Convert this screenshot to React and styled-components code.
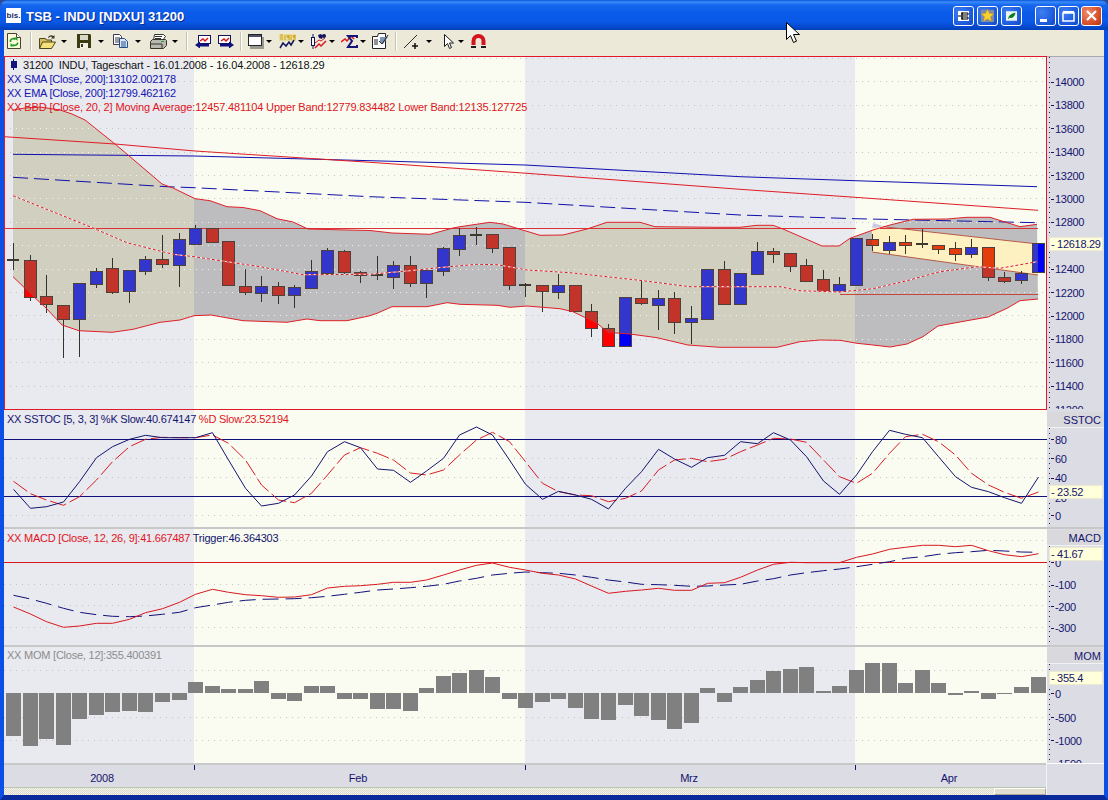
import React from 'react';
import styled, { createGlobalStyle } from 'styled-components';

const GlobalStyle = createGlobalStyle`
  html, body { margin: 0; padding: 0; background: #2a4a9a; }
  body { font-family: "Liberation Sans", Arial, sans-serif; overflow: hidden; }
  #root { width: 1108px; height: 800px; }
`;

const AXIS_INK = '#14146e';
const FONT = '"Liberation Sans", Arial, sans-serif';

const Window = styled.div`
  position: relative;
  width: 1108px;
  height: 800px;
  display: flex;
  flex-direction: column;
  overflow: hidden;
  border-radius: 8px 8px 0 0;
`;

const TitleBar = styled.div`
  height: 30px;
  flex: none;
  display: flex;
  align-items: center;
  padding: 1px 6px 0 6px;
  box-sizing: border-box;
  background: linear-gradient(180deg, #0a56d8 0, #3a8cfa 2px, #1666ee 5px, #0a5aea 14px, #0a58e6 22px, #0448cc 27px, #0340b8 30px);
`;

const TitleLogo = styled.div`
  width: 15px;
  height: 15px;
  background: #fff;
  color: #1a2a6a;
  font: bold 8px ${FONT};
  line-height: 15px;
  text-align: center;
`;

const TitleText = styled.div`
  margin-left: 5px;
  padding-top: 2px;
  color: #fff;
  font: bold 13px ${FONT};
  text-shadow: 1px 1px 0 #0a2a90;
  flex: 1;
`;

const CaptionGroup = styled.div`
  display: flex;
  gap: ${p => p.$gap}px;
  margin-left: ${p => p.$left}px;
`;

const CaptionButton = styled.div`
  width: 21px;
  height: 20px;
  box-sizing: border-box;
  border: 1px solid #fff;
  border-radius: 3px;
  display: flex;
  align-items: center;
  justify-content: center;
  background: ${p => p.$close
    ? 'radial-gradient(circle at 30% 30%, #ee8a6a, #d8502c 60%, #b83010)'
    : 'radial-gradient(circle at 30% 30%, #3f7ff0, #1f5ee0 60%, #1448c4)'};
`;

const Body = styled.div`
  flex: 1;
  display: flex;
  flex-direction: column;
  border-style: solid;
  border-color: #0b4fe6;
  border-width: 0 4px 5px 4px;
  border-bottom-color: #0a2a9c;
  min-height: 0;
`;

const Toolbar = styled.div`
  height: 26px;
  flex: none;
  box-sizing: border-box;
  display: flex;
  align-items: center;
  padding: 0 0 4px 3px;
  background: #ece9d8;
`;

const Tool = styled.span`
  display: flex;
  margin-left: ${p => p.$left || 0}px;
  width: ${p => p.$width}px;
`;

const DropArrow = styled.span`
  width: 0;
  height: 0;
  margin-left: ${p => p.$left}px;
  border-left: 3px solid transparent;
  border-right: 3px solid transparent;
  border-top: 3px solid #000;
`;

const ToolSep = styled.span`
  width: 1px;
  height: 19px;
  margin-left: ${p => p.$left}px;
  background: #c6c3b2;
  border-right: 1px solid #fff;
`;

const Pane = styled.div`
  display: flex;
  height: ${p => p.$height}px;
  flex: none;
`;

const Plot = styled.div`
  position: relative;
  width: 1043px;
  flex: none;
  overflow: hidden;
  &::after {
    content: '';
    display: ${p => (p.$framed ? 'block' : 'none')};
    position: absolute;
    inset: 0 0 1px 0;
    border: 1px solid #e2182a;
  }
`;

const Chart = styled.svg`
  display: block;
`;

const Legend = styled.div`
  position: absolute;
  top: ${p => p.$top}px;
  left: 3px;
  font-size: 11px;
  line-height: 14px;
  white-space: nowrap;
`;

const LegendLine = styled.div`
  color: ${p => p.$color};
  padding-left: ${p => p.$indent || 0}px;
  letter-spacing: ${p => p.$spacing || -0.23}px;
`;

const LegendPart = styled.span`
  color: ${p => p.$color};
`;

const TitleCandle = styled.svg`
  position: absolute;
  left: 4px;
  top: 3px;
`;

const Axis = styled.div`
  position: relative;
  flex: 1;
  display: flex;
  flex-direction: column;
  background: #dcdce4;
  overflow: hidden;
  border-top: ${p => (p.$ruled ? '1px solid #a8a8b0' : 'none')};
`;

const AxisHeader = styled.div`
  height: 15px;
  flex: none;
  margin-top: 1px;
  background: #d9d9dd;
  border-bottom: 1px solid #f2f2f2;
  color: ${AXIS_INK};
  font-size: 11px;
  line-height: 16px;
  text-align: right;
  padding-right: 3px;
`;

const AxisLabel = styled.text`
  font: 11px ${FONT};
  letter-spacing: -0.3px;
  fill: ${AXIS_INK};
`;

const ValueFlag = styled.div`
  position: absolute;
  left: 2px;
  right: 1px;
  top: ${p => p.$top}px;
  height: 14px;
  box-sizing: border-box;
  background: #ffffdc;
  border: 1px solid #ecebd0;
  color: #14146e;
  font-size: 11px;
  letter-spacing: -0.3px;
  line-height: 13px;
  padding-left: 1px;
  white-space: nowrap;
`;

const Rule = styled.div`
  height: 2px;
  flex: none;
  background: #c8c8c8;
`;

const Footer = styled.div`
  display: flex;
  flex: 1;
  min-height: 0;
`;

const FooterMain = styled.div`
  width: 1043px;
  display: flex;
  flex-direction: column;
  flex: none;
  border-right: 1px solid #f4f4f4;
  box-sizing: border-box;
`;

const FooterCorner = styled.div`
  flex: 1;
  background: #dcdce4;
  border-top: 1px solid #fff;
`;

const TimeAxis = styled.div`
  height: 22px;
  flex: none;
  background: #dcdce4;
  border-bottom: 1px solid #b8c8b0;
`;

const TimeLabel = styled.text`
  font: 11px ${FONT};
  letter-spacing: -0.2px;
  fill: ${AXIS_INK};
  text-anchor: middle;
`;

const ScrollTrack = styled.div`
  flex: 1;
  display: flex;
  justify-content: flex-end;
  background: repeating-conic-gradient(#f6f5ee 0 25%, #d8d6c8 0 50%) 0 0 / 2px 2px;
`;

const ScrollThumb = styled.div`
  width: 52px;
  box-sizing: border-box;
  background: #e2dfd0;
  border-top: 1px solid #fff;
  border-left: 1px solid #fff;
  border-right: 1px solid #a8a698;
  border-bottom: 1px solid #a8a698;
`;

const MouseCursor = styled.svg`
  position: absolute;
  left: 786px;
  top: 22px;
`;

// ---- data, in page pixels ----

const X = i => Math.round(13.3 + 16.52 * i) + 0.5;
const path = list => list.map(p => p.join(',')).join(' ');
const series = ys => ys.map((y, i) => `${X(i)},${y}`).join(' ');

const candles = [
  [243, 259, 261, 270, 'd'], [255, 260, 297, 301, 'r'], [275, 296, 304, 313, 'r'], [305, 305, 319, 358, 'r'],
  [283, 283, 319, 357, 'b'], [268, 271, 284, 288, 'b'], [258, 268, 292, 294, 'r'], [270, 270, 291, 303, 'b'],
  [256, 259, 271, 275, 'b'], [235, 259, 264, 268, 'r'], [233, 239, 265, 287, 'b'], [225, 228, 244, 245, 'b'],
  [228, 228, 242, 243, 'r'], [241, 241, 285, 285, 'r'], [269, 286, 292, 295, 'r'], [276, 286, 293, 302, 'b'],
  [282, 286, 295, 304, 'r'], [285, 287, 295, 308, 'b'], [260, 271, 288, 288, 'b'], [248, 250, 273, 273, 'b'],
  [250, 251, 272, 274, 'r'], [271, 272, 275, 283, 'r'], [256, 274, 276, 280, 'd'], [261, 265, 277, 289, 'b'],
  [256, 265, 283, 287, 'r'], [270, 270, 283, 298, 'b'], [247, 248, 271, 276, 'b'], [228, 235, 249, 256, 'b'],
  [227, 234, 236, 245, 'd'], [234, 234, 248, 253, 'r'], [247, 247, 285, 290, 'r'], [283, 284, 286, 297, 'd'],
  [285, 285, 291, 312, 'r'], [274, 285, 292, 299, 'b'], [285, 285, 311, 311, 'r'], [304, 311, 328, 337, 'r'],
  [324, 328, 346, 347, 'r'], [297, 297, 346, 346, 'b'], [280, 298, 303, 305, 'r'], [290, 298, 305, 330, 'b'],
  [292, 298, 322, 334, 'r'], [306, 318, 322, 344, 'b'], [269, 269, 319, 319, 'b'], [261, 269, 304, 304, 'r'],
  [273, 273, 304, 304, 'b'], [242, 251, 274, 274, 'b'], [248, 251, 254, 263, 'r'], [253, 253, 266, 272, 'r'],
  [259, 265, 281, 282, 'r'], [270, 279, 291, 292, 'r'], [277, 284, 291, 293, 'b'], [238, 238, 285, 285, 'b'],
  [234, 239, 245, 251, 'r'], [236, 242, 250, 254, 'b'], [235, 242, 245, 254, 'r'], [229, 243, 245, 248, 'd'],
  [245, 245, 249, 254, 'r'], [242, 248, 254, 261, 'r'], [239, 247, 254, 258, 'b'], [247, 247, 277, 281, 'r'],
  [272, 277, 281, 283, 'r'], [271, 273, 280, 284, 'b'], [243, 243, 272, 272, 'b'],
];

const upperBand = [
  [13, 110], [25, 108], [40, 107], [60, 110], [72, 114], [85, 120], [115, 144], [128, 155], [162, 184], [173, 188],
  [195, 198.7], [210, 200.7], [227, 206.7], [243, 207.5], [260, 210.7], [277, 218.7], [293, 222], [308, 229], [327, 229.5],
  [370, 230.5], [392, 233], [430, 234.3], [453, 228], [460, 226.7], [490, 222.3], [503, 224], [517, 228.3], [540, 235.3],
  [563, 235], [587, 229], [607, 222.3], [640, 222.3], [655, 226.7], [717, 227.3], [740, 227.3], [757, 225.3], [773, 225.3],
  [783, 229], [822, 246], [839, 246], [850, 238.3], [873, 230], [890, 225], [913, 219.3], [947, 219], [967, 217.3],
  [990, 217.3], [1020, 226.7], [1037, 224.3],
];

const lowerBand = [
  [13, 276.7], [33, 296], [46, 308], [62, 325], [79, 330.7], [112, 332.3], [133, 329.3], [160, 322.3], [180, 320], [194, 315.7],
  [211, 315], [243, 320.7], [287, 322.3], [307, 319], [320, 320.7], [347, 320.7], [370, 315.7], [377, 313.3], [392, 306.7],
  [427, 306.7], [447, 302.7], [460, 304.3], [497, 305.3], [510, 307.3], [527, 306], [560, 308.7], [573, 311.7], [597, 323.3],
  [608, 332.3], [630, 334], [657, 337.7], [688, 345], [720, 347.3], [777, 347.3], [800, 341.7], [820, 340], [840, 340.3],
  [857, 343.3], [873, 345], [890, 347], [907, 344], [923, 336.7], [938, 326], [967, 320.7], [988, 317], [1007, 308.3],
  [1020, 300.7], [1038, 299],
];

const movingAverage = [
  [13, 195.7], [90, 226.7], [127, 242.7], [173, 254.3], [194, 256.7], [260, 266.7], [303, 274.7], [370, 274.3], [410, 270.7],
  [443, 267.3], [477, 264.3], [497, 264.7], [527, 270], [570, 272.7], [637, 280], [690, 286.7], [780, 286.7], [800, 290.7],
  [840, 292], [873, 288.7], [907, 280.7], [940, 271.7], [977, 266.7], [1000, 268.3], [1037, 261.7],
];

const trendLine = [[4, 136.7], [115, 144], [195, 151], [370, 162.3], [527, 173.3], [740, 189.3], [855, 197.3], [1038, 210.3]];
const smaLine = [[13, 154.3], [194, 156], [370, 160.7], [525, 165], [740, 176.7], [855, 180.7], [1037, 186.7]];
const emaLine = [[13, 177.3], [167, 186.7], [194, 187.7], [370, 196.7], [525, 202.3], [740, 215], [855, 218.7], [1037, 222.7]];
const channel = [[872, 228], [883, 226.7], [1038, 244], [1038, 275], [872, 252]];

const stochK = [489.3, 508.3, 506.7, 502, 481.7, 457.7, 446.7, 439.3, 435.3, 437.7, 437.7, 437.7, 432.7, 460, 488.3, 506, 503.3, 495, 476, 451.7, 441.7, 447.7, 469, 470.3, 482.3, 471, 458.3, 435, 427, 435, 460, 484.3, 499.3, 491.3, 495, 499.3, 509, 488.3, 471.7, 449.3, 459, 467.3, 457.7, 455.3, 441.7, 443.7, 432.7, 440, 456.7, 481, 494.3, 475, 451.7, 430.3, 434.3, 437.7, 456.7, 476.7, 487.3, 491.7, 497.7, 503.3, 477];
const stochD = [481.3, 493.7, 500, 505.3, 496.7, 480, 461.7, 446.7, 439.3, 437.3, 437.7, 437.7, 435, 443.3, 460, 485, 500, 502.7, 493.3, 475, 455, 447.7, 453.3, 460, 473, 475, 470, 455, 440, 432.3, 441.7, 461.7, 483.3, 491.7, 495, 495.7, 501.7, 498.3, 491, 470, 460, 458.3, 461.7, 459.3, 451.7, 445, 438.3, 439, 442.3, 460, 476.7, 483.3, 473.3, 453.3, 436.7, 434.3, 441.7, 455, 473.3, 485, 492.3, 498.3, 492];
const macdLine = [607, 614, 621.7, 627.3, 626, 623.3, 623.3, 619.3, 612.7, 608.7, 602.3, 594.3, 589.3, 592.3, 594.7, 595.7, 597.3, 597, 594.7, 588, 586.3, 585.7, 584.3, 582.3, 582.3, 580, 575, 570, 565.3, 563, 567.3, 570, 573.3, 575, 579, 586, 593.3, 591.3, 590, 588.3, 590.3, 590.3, 583.3, 582.7, 577.3, 570, 564.3, 562.3, 562.7, 562.7, 562.7, 557.3, 554, 549.3, 547.3, 545.3, 545.3, 546.7, 545.3, 550.7, 554.7, 556.7, 553.7];
const triggerLine = [595.3, 599, 603.3, 608.3, 612.3, 614.7, 616.3, 616.7, 616, 614.3, 612.3, 607.7, 605, 602.3, 600.3, 599.3, 599, 598.7, 597.7, 596.3, 594.3, 592.3, 590, 589, 587.7, 586.3, 584.3, 581, 578.3, 575, 573.3, 572, 572.7, 573.3, 575, 577.3, 580, 582, 584.3, 584.7, 585.3, 586.3, 586, 585, 584.3, 581, 578.7, 575, 572.7, 570.7, 569, 566.7, 564.3, 561.7, 558.3, 556.7, 554.3, 552.7, 551.7, 550.3, 551, 552, 552.3];
const momentum = [736, 746, 739, 745, 719, 715, 712, 711, 712, 702, 700, 682, 686, 689, 689, 681, 699, 701, 686, 686, 699, 699, 709, 709, 711, 688, 676, 673, 670, 677, 699, 708, 702, 699, 708, 719, 720, 705, 716, 720, 729, 723, 688, 702, 687, 680, 671, 669, 667, 691, 686, 670, 663, 663, 683, 670, 683, 695, 691, 699, 694, 687, 677];

const mainGrid = Array.from({ length: 15 }, (_, n) => Math.round(58 + 23.4 * n));
const mainTicks = [14000, 13800, 13600, 13400, 13200, 13000, 12800, 12400, 12200, 12000, 11800, 11600, 11400, 11200].map(v => ({
  text: String(v),
  y: 81.5 + ((14000 - v) / 200) * 23.4,
}));

const bands = [
  { x: 4, w: 190, fill: '#e9e9f0', band: '#d1cfbf' },
  { x: 194, w: 331, fill: '#fafcf1', band: '#bdbdbf' },
  { x: 525, w: 330, fill: '#e9e9f0', band: '#d1cfbf' },
  { x: 855, w: 192, fill: '#fafcf1', band: '#bdbdbf' },
];

// ---- chart pieces ----

const MonthBands = ({ top, height, tint }) => bands.map(b => (
  <rect key={b.x} x={b.x} y={top} width={b.w} height={height} fill={tint ? b.band : b.fill} shapeRendering="crispEdges" />
));

const GridLines = ({ ys, color = '#c4c4c0' }) => ys.map(y => (
  <line key={y} x1="4" x2="1047" y1={y + 0.5} y2={y + 0.5} stroke={color} strokeDasharray="1 5" shapeRendering="crispEdges" />
));

const Candle = ({ c, i }) => {
  const [high, top, bottom, low, kind] = c;
  const x = X(i);
  const body = kind === 'r' ? '#c2342a' : '#3336cc';
  return (
    <g shapeRendering="crispEdges">
      <line x1={x} x2={x} y1={high} y2={low} stroke="#33332e" />
      {kind === 'd'
        ? <rect x={x - 6.5} y={top} width="12" height="2" fill="#3a3a30" />
        : <rect x={x - 6} y={top + 0.5} width="12" height={bottom - top} fill={body} stroke="#50403c" />}
    </g>
  );
};

const CandleBright = ({ c, i, red, blue }) => {
  const [, top, bottom, , kind] = c;
  if (kind === 'd') return null;
  const fill = kind === 'r' ? red : blue;
  if (!fill) return null;
  return <rect x={X(i) - 5.5} y={top + 1} width="11" height={bottom - top - 1} fill={fill} shapeRendering="crispEdges" />;
};

const MainChart = () => {
  const bandShape = path([...upperBand, ...[...lowerBand].reverse()]);
  const belowBand = path([...lowerBand, [1038, 230], [1047, 230], [1047, 410], [13, 410]]);
  const inChannel = path(channel);
  return (
    <Chart width="1043" height="355" viewBox="4 56 1043 355">
      <defs>
        <clipPath id="band"><polygon points={bandShape} /></clipPath>
        <clipPath id="below"><polygon points={belowBand} /></clipPath>
        <clipPath id="channel"><polygon points={inChannel} /></clipPath>
      </defs>
      <MonthBands top={56} height={355} />
      <GridLines ys={mainGrid} />
      <g clipPath="url(#band)">
        <MonthBands top={56} height={355} tint />
        <GridLines ys={mainGrid} color="#f2f2ee" />
      </g>
      <polygon points="873,223 883,226 872,229" fill="#c8c8e8" />
      <polygon points={inChannel} fill="#fdf1c2" />
      <line x1="4" x2="856" y1="228.5" y2="228.5" stroke="#d8343a" shapeRendering="crispEdges" />
      <line x1="880" x2="1038" y1="228.5" y2="228.5" stroke="#d8343a" shapeRendering="crispEdges" />
      <line x1="840" x2="1038" y1="294.5" y2="294.5" stroke="#c84840" shapeRendering="crispEdges" />
      <line x1="883" y1="226.7" x2="1038" y2="244" stroke="#b85a48" />
      <line x1="872" y1="252" x2="1038" y2="275" stroke="#b85a48" />
      <polyline points={path(smaLine)} fill="none" stroke="#1010b0" />
      <polyline points={path(trendLine)} fill="none" stroke="#e01c24" />
      <polyline points={path(emaLine)} fill="none" stroke="#1010a8" strokeDasharray="15 6" />
      {candles.map((c, i) => <Candle key={i} c={c} i={i} />)}
      <g clipPath="url(#channel)">
        {candles.map((c, i) => <CandleBright key={i} c={c} i={i} red="#e43c0c" />)}
      </g>
      <g clipPath="url(#below)">
        {candles.map((c, i) => <CandleBright key={i} c={c} i={i} red="#ff0000" blue="#0000f4" />)}
      </g>
      <polyline points={path(upperBand)} fill="none" stroke="#e02028" />
      <polyline points={path(lowerBand)} fill="none" stroke="#e02028" />
      <polyline points={path(movingAverage)} fill="none" stroke="#fff" />
      <polyline points={path(movingAverage)} fill="none" stroke="#d81c24" strokeDasharray="3 2" />
    </Chart>
  );
};

const StochChart = () => (
  <Chart width="1043" height="116" viewBox="4 411 1043 116">
    <MonthBands top={411} height={116} />
    <GridLines ys={[458, 477, 515]} />
    <line x1="4" x2="1047" y1="439.5" y2="439.5" stroke="#10107a" shapeRendering="crispEdges" />
    <line x1="4" x2="1047" y1="496.5" y2="496.5" stroke="#10107a" shapeRendering="crispEdges" />
    <polyline points={series(stochD)} fill="none" stroke="#d81c24" strokeDasharray="17 4" />
    <polyline points={series(stochK)} fill="none" stroke="#14146e" />
  </Chart>
);

const MacdChart = () => (
  <Chart width="1043" height="116" viewBox="4 529 1043 116">
    <MonthBands top={529} height={116} />
    <GridLines ys={[540, 584, 605, 627]} />
    <line x1="4" x2="1047" y1="562.5" y2="562.5" stroke="#d8181f" shapeRendering="crispEdges" />
    <polyline points={series(triggerLine)} fill="none" stroke="#10107a" strokeDasharray="16 7" />
    <polyline points={series(macdLine)} fill="none" stroke="#d8181f" />
  </Chart>
);

const MomentumChart = () => (
  <Chart width="1043" height="116" viewBox="4 647 1043 116">
    <MonthBands top={647} height={116} />
    <GridLines ys={[670, 717, 740]} />
    {momentum.map((y, i) => (
      <rect
        key={i}
        x={X(i) - 8}
        y={Math.min(y, 693)}
        width="15"
        height={Math.max(1, Math.abs(y - 693))}
        fill="#808080"
        shapeRendering="crispEdges"
      />
    ))}
  </Chart>
);

const AxisScale = ({ top, height, ticks }) => (
  <svg width="57" height={height} viewBox={`1047 ${top} 57 ${height}`} style={{ display: 'block' }}>
    <line x1="1049.5" x2="1049.5" y1={top} y2={top + height} stroke="#26264a" strokeDasharray="1 4" shapeRendering="crispEdges" />
    {ticks.map(t => (
      <g key={t.text}>
        <line x1="1051" x2="1054" y1={Math.round(t.y) + 0.5} y2={Math.round(t.y) + 0.5} stroke={AXIS_INK} shapeRendering="crispEdges" />
        <AxisLabel x="1055" y={t.y + 4.5}>{t.text}</AxisLabel>
      </g>
    ))}
  </svg>
);

// ---- icons ----

const RefreshIcon = () => (
  <svg width="14" height="16" viewBox="0 0 14 16">
    <path d="M.5.5h9l4 4v11H.5z" fill="#fdfbd8" stroke="#454530" />
    <path d="M9.5.5v4h4" fill="#fff" stroke="#454530" />
    <path d="M3.500 9V7.500C4 5.500 7 5 8.500 6.500" fill="none" stroke="#1d9a2a" strokeWidth="1.600" />
    <path d="M7 4.500h3.500V8z" fill="#1d9a2a" />
    <path d="M10.500 9.500v1C10 12.500 7 13 5.500 11.500" fill="none" stroke="#1d9a2a" strokeWidth="1.600" />
    <path d="M7 13.500H3.500V10z" fill="#1d9a2a" />
  </svg>
);

const FolderIcon = () => (
  <svg width="17" height="15" viewBox="0 0 17 15">
    <path d="M.5 4.500h6l1 1.500h5v8H.5z" fill="#d9c05a" stroke="#4d4620" />
    <path d="M.5 14.500l3-6.500h13l-4 6.500z" fill="#f6e27a" stroke="#4d4620" />
    <path d="M9 3.500C10 1 13 .7 14.500 2l1-1v3.500H12l1.200-1.200c-1-.8-2.800-.6-3.300.6z" fill="#3c3c28" />
  </svg>
);

const SaveIcon = () => (
  <svg width="14" height="14" viewBox="0 0 14 14">
    <path d="M0 0h13l1 1v13H0z" fill="#3c3c12" />
    <rect x="3" y="1" width="8" height="5" fill="#d8d8c8" />
    <rect x="3" y="9" width="8" height="5" fill="#f0f0e4" />
    <rect x="4" y="10" width="2" height="3" fill="#3c3c12" />
  </svg>
);

const CopyIcon = () => (
  <svg width="15" height="14" viewBox="0 0 15 14">
    <path d="M.5.5h6l2 2v8h-8z" fill="#fff" stroke="#39394a" />
    <path d="M2 4h5M2 6h5M2 8h5" stroke="#39394a" />
    <path d="M6.500 4.500h5l3 3v6h-8z" fill="#dce8f8" stroke="#24508a" />
    <path d="M8 8h5M8 10h5M8 12h5" stroke="#24508a" />
  </svg>
);

const PrintIcon = () => (
  <svg width="17" height="15" viewBox="0 0 17 15">
    <path d="M4.500.5h9l2 2-3 4h-9z" fill="#fff" stroke="#35352c" />
    <path d="M5 2.500h7M5 4.500h6" stroke="#35352c" />
    <path d="M.5 7.500l2-2h13l1 1v5l-3 3h-13z" fill="#b8b8ae" stroke="#35352c" />
    <path d="M1 10h11v4" fill="none" stroke="#35352c" />
    <rect x="11" y="7" width="3" height="1" fill="#20a040" />
  </svg>
);

const ChartArrowIcon = ({ flip }) => (
  <svg width="16" height="14" viewBox="0 0 16 14" style={flip ? { transform: 'scaleX(-1)' } : undefined}>
    <rect x="3.500" y="1.500" width="12" height="8" fill="#fff" stroke="#14145a" />
    <path d={flip ? 'M5 4l3 3 2-2 3 2' : 'M5 7l3-2 2 2 3-3'} fill="none" stroke="#d8181f" strokeWidth="1.500" />
    <path d="M0 11l5-3.500v2h9v3H5v2z" fill="#10107a" />
  </svg>
);

const WindowIcon = () => (
  <svg width="16" height="15" viewBox="0 0 16 15">
    <rect x="2" y="3" width="14" height="12" fill="#9a9a90" />
    <rect x=".5" y=".5" width="13" height="11" fill="#fff" stroke="#23232a" />
    <rect x="1" y="1" width="12" height="2" fill="#50506a" />
  </svg>
);

const GoldIcon = () => (
  <svg width="17" height="16" viewBox="0 0 17 16">
    <path d="M0 1h17v7H0z" fill="#e8d46a" opacity=".55" />
    <path d="M1 2h3M1 4h3M1 6h3M6 2v5M8 2l1 3 1-3v5M12 2v5M14 2l1 3 1-3v5" stroke="#cda51c" fill="none" />
    <path d="M1 15l3-5 3 3 3-4 2 3 3-5" fill="none" stroke="#14145a" strokeWidth="1.500" />
  </svg>
);

const CandleIcon = () => (
  <svg width="17" height="17" viewBox="0 0 17 17">
    <path d="M3 1v15" stroke="#14145a" />
    <rect x="1.500" y="4.500" width="3" height="8" fill="#fff" stroke="#14145a" />
    <path d="M8 2l3-1 2 2-1 3-3-1z" fill="#14145a" />
    <circle cx="14" cy="3" r="2" fill="#14145a" />
    <path d="M5 15l4-4 2 2 5-5" fill="none" stroke="#d8181f" strokeWidth="1.500" />
    <path d="M5 10l4-3 2 1 4-3" fill="none" stroke="#d8181f" />
  </svg>
);

const SigmaIcon = () => (
  <svg width="18" height="16" viewBox="0 0 18 16">
    <path d="M0 9l4-3 2 2 4-5 3 3" fill="none" stroke="#d8181f" strokeWidth="1.500" />
    <path d="M16 5V3H7l4 5-4 6h9v-2" fill="none" stroke="#14147a" strokeWidth="2" />
  </svg>
);

const PropsIcon = () => (
  <svg width="17" height="16" viewBox="0 0 17 16">
    <path d="M.5 3.500h5l1-3h7v15H.5z" fill="#fff" stroke="#23232a" />
    <path d="M2 7h4M2 9h4M2 11h4" stroke="#23232a" />
    <path d="M8 4h8l-5 7-3-2z" fill="#7a96b8" />
    <path d="M7 8l3 3 6-9" fill="none" stroke="#23232a" />
  </svg>
);

const LineIcon = () => (
  <svg width="15" height="15" viewBox="0 0 15 15">
    <path d="M0 14L13 1" stroke="#2c2c2c" />
    <path d="M11 9v6M8 12h6" stroke="#111" strokeWidth="1.500" />
  </svg>
);

const ArrowIcon = () => (
  <svg width="10" height="15" viewBox="0 0 10 15">
    <path d="M.5.500v12l3-3 2 5 2-1-2-4.500h4z" fill="#fff" stroke="#1a1a1a" />
  </svg>
);

const MagnetIcon = () => (
  <svg width="15" height="15" viewBox="0 0 15 15">
    <path d="M2.500 11V7a5 5 0 0 1 10 0v4" fill="none" stroke="#d4141c" strokeWidth="4" />
    <path d="M0 12h5v2H0zM10 12h5v2h-5z" fill="#1c1c1c" />
  </svg>
);

const PinGlyph = () => (
  <svg width="11" height="10" viewBox="0 0 11 10">
    <rect width="11" height="10" fill="#fff" />
    <path d="M0 5h4M4 1v8M4 2h6v2H4zM4 6h6v2H4z" fill="none" stroke="#000" />
  </svg>
);

const StarGlyph = () => (
  <svg width="13" height="13" viewBox="0 0 15 15">
    <rect y="1" width="15" height="14" fill="#7f8ca8" />
    <path d="M7.500 0l2.200 5 5.300.4-4 3.500 1.300 5.400-4.800-2.900-4.800 2.900 1.300-5.400-4-3.500 5.300-.4z" fill="#f8d030" stroke="#b88a10" strokeWidth=".5" />
  </svg>
);

const LeafGlyph = () => (
  <svg width="11" height="10" viewBox="0 0 15 13">
    <rect width="15" height="13" fill="#e8f6ee" />
    <path d="M3 11c0-5 4-8 10-9-1 5-4 8-8 7z" fill="#0c7a24" />
  </svg>
);

const MinimizeGlyph = () => (
  <svg width="15" height="14" viewBox="0 0 15 14"><rect x="2" y="10" width="7" height="3" fill="#fff" /></svg>
);

const MaximizeGlyph = () => (
  <svg width="13" height="12" viewBox="0 0 13 12"><path d="M1 3h11v8H1z" fill="none" stroke="#fff" strokeWidth="1.500" /><rect x="1" y="1" width="11" height="2" fill="#fff" /></svg>
);

const CloseGlyph = () => (
  <svg width="13" height="13" viewBox="0 0 13 13"><path d="M2 2l9 9M11 2l-9 9" stroke="#fff" strokeWidth="2.200" /></svg>
);

const stochTicks = [{ text: '80', y: 439.3 }, { text: '60', y: 458.3 }, { text: '40', y: 477.7 }, { text: '20', y: 497 }, { text: '0', y: 515 }];
const macdTicks = [{ text: '0', y: 562.3 }, { text: '-100', y: 584.7 }, { text: '-200', y: 606 }, { text: '-300', y: 627.7 }];
const momTicks = [{ text: '0', y: 693.3 }, { text: '-500', y: 717.3 }, { text: '-1000', y: 740 }, { text: '-1500', y: 763 }];

export default function App() {
  return (
    <Window>
      <GlobalStyle />
      <TitleBar>
        <TitleLogo>bis.</TitleLogo>
        <TitleText>TSB - INDU [NDXU] 31200</TitleText>
        <CaptionGroup $gap={3} $left={0}>
          <CaptionButton><PinGlyph /></CaptionButton>
          <CaptionButton><StarGlyph /></CaptionButton>
          <CaptionButton><LeafGlyph /></CaptionButton>
        </CaptionGroup>
        <CaptionGroup $gap={2} $left={13}>
          <CaptionButton><MinimizeGlyph /></CaptionButton>
          <CaptionButton><MaximizeGlyph /></CaptionButton>
          <CaptionButton $close><CloseGlyph /></CaptionButton>
        </CaptionGroup>
      </TitleBar>
      <Body>
        <Toolbar>
          <Tool $width={14}><RefreshIcon /></Tool>
          <ToolSep $left={9} />
          <Tool $left={7} $width={17}><FolderIcon /></Tool>
          <DropArrow $left={5} />
          <Tool $left={10} $width={14}><SaveIcon /></Tool>
          <DropArrow $left={7} />
          <Tool $left={9} $width={15}><CopyIcon /></Tool>
          <DropArrow $left={7} />
          <Tool $left={9} $width={17}><PrintIcon /></Tool>
          <DropArrow $left={5} />
          <ToolSep $left={8} />
          <Tool $left={7} $width={16}><ChartArrowIcon /></Tool>
          <Tool $left={7} $width={16}><ChartArrowIcon flip /></Tool>
          <ToolSep $left={6} />
          <Tool $left={6} $width={16}><WindowIcon /></Tool>
          <DropArrow $left={2} />
          <Tool $left={7} $width={17}><GoldIcon /></Tool>
          <DropArrow $left={2} />
          <Tool $left={6} $width={17}><CandleIcon /></Tool>
          <DropArrow $left={2} />
          <Tool $left={6} $width={18}><SigmaIcon /></Tool>
          <DropArrow $left={1} />
          <Tool $left={6} $width={17}><PropsIcon /></Tool>
          <ToolSep $left={6} />
          <Tool $left={7} $width={15}><LineIcon /></Tool>
          <DropArrow $left={7} />
          <Tool $left={12} $width={10}><ArrowIcon /></Tool>
          <DropArrow $left={4} />
          <Tool $left={7} $width={15}><MagnetIcon /></Tool>
        </Toolbar>

        <Pane $height={355}>
          <Plot $framed>
            <MainChart />
            <TitleCandle width="12" height="12" viewBox="0 0 12 12">
              <path d="M5.500 0v11" stroke="#14147a" />
              <rect x="3" y="2" width="6" height="7" fill="#14147a" />
            </TitleCandle>
            <Legend $top={2}>
              <LegendLine $color="#111" $indent={16} $spacing={-0.12}>31200&nbsp; INDU, Tageschart - 16.01.2008 - 16.04.2008 - 12618.29</LegendLine>
              <LegendLine $color="#1414b4">XX SMA [Close, 200]:13102.002178</LegendLine>
              <LegendLine $color="#1414b4">XX EMA [Close, 200]:12799.462162</LegendLine>
              <LegendLine $color="#e0141c" $spacing={-0.13}>XX BBD [Close, 20, 2] Moving Average:12457.481104 Upper Band:12779.834482 Lower Band:12135.127725</LegendLine>
            </Legend>
          </Plot>
          <Axis $ruled>
            <AxisScale top={57} height={352} ticks={mainTicks} />
            <ValueFlag $top={180}>- 12618.29</ValueFlag>
          </Axis>
        </Pane>

        <Pane $height={116}>
          <Plot>
            <StochChart />
            <Legend $top={1}>
              <LegendLine $color="#14146e">
                XX SSTOC [5, 3, 3] %K Slow:40.674147 <LegendPart $color="#e0141c">%D Slow:23.52194</LegendPart>
              </LegendLine>
            </Legend>
          </Plot>
          <Axis>
            <AxisHeader>SSTOC</AxisHeader>
            <AxisScale top={428} height={99} ticks={stochTicks} />
            <ValueFlag $top={74}>- 23.52</ValueFlag>
          </Axis>
        </Pane>
        <Rule />

        <Pane $height={116}>
          <Plot>
            <MacdChart />
            <Legend $top={2}>
              <LegendLine $color="#e0141c">
                XX MACD [Close, 12, 26, 9]:41.667487 <LegendPart $color="#14146e">Trigger:46.364303</LegendPart>
              </LegendLine>
            </Legend>
          </Plot>
          <Axis>
            <AxisHeader>MACD</AxisHeader>
            <AxisScale top={546} height={99} ticks={macdTicks} />
            <ValueFlag $top={18}>- 41.67</ValueFlag>
          </Axis>
        </Pane>
        <Rule />

        <Pane $height={116}>
          <Plot>
            <MomentumChart />
            <Legend $top={1}>
              <LegendLine $color="#8c8c8c">XX MOM [Close, 12]:355.400391</LegendLine>
            </Legend>
          </Plot>
          <Axis>
            <AxisHeader>MOM</AxisHeader>
            <AxisScale top={664} height={99} ticks={momTicks} />
            <ValueFlag $top={24}>- 355.4</ValueFlag>
          </Axis>
        </Pane>

        <Footer>
          <FooterMain>
            <Rule />
            <TimeAxis>
              <svg width="1042" height="21" viewBox="4 765 1042 21" style={{ display: 'block' }}>
                {[194, 525, 855].map(x => (
                  <line key={x} x1={x + 0.5} x2={x + 0.5} y1="765" y2="770" stroke="#14146e" shapeRendering="crispEdges" />
                ))}
                <TimeLabel x="102" y="782">2008</TimeLabel>
                <TimeLabel x="358" y="782">Feb</TimeLabel>
                <TimeLabel x="689" y="782">Mrz</TimeLabel>
                <TimeLabel x="949" y="782">Apr</TimeLabel>
              </svg>
            </TimeAxis>
            <ScrollTrack><ScrollThumb /></ScrollTrack>
          </FooterMain>
          <FooterCorner />
        </Footer>
      </Body>
      <MouseCursor width="14" height="21" viewBox="0 0 14 21">
        <path d="M.5.500v17l4-4 3 7 3-1.300-3-6.700h6z" fill="#fff" stroke="#000" />
      </MouseCursor>
    </Window>
  );
}
